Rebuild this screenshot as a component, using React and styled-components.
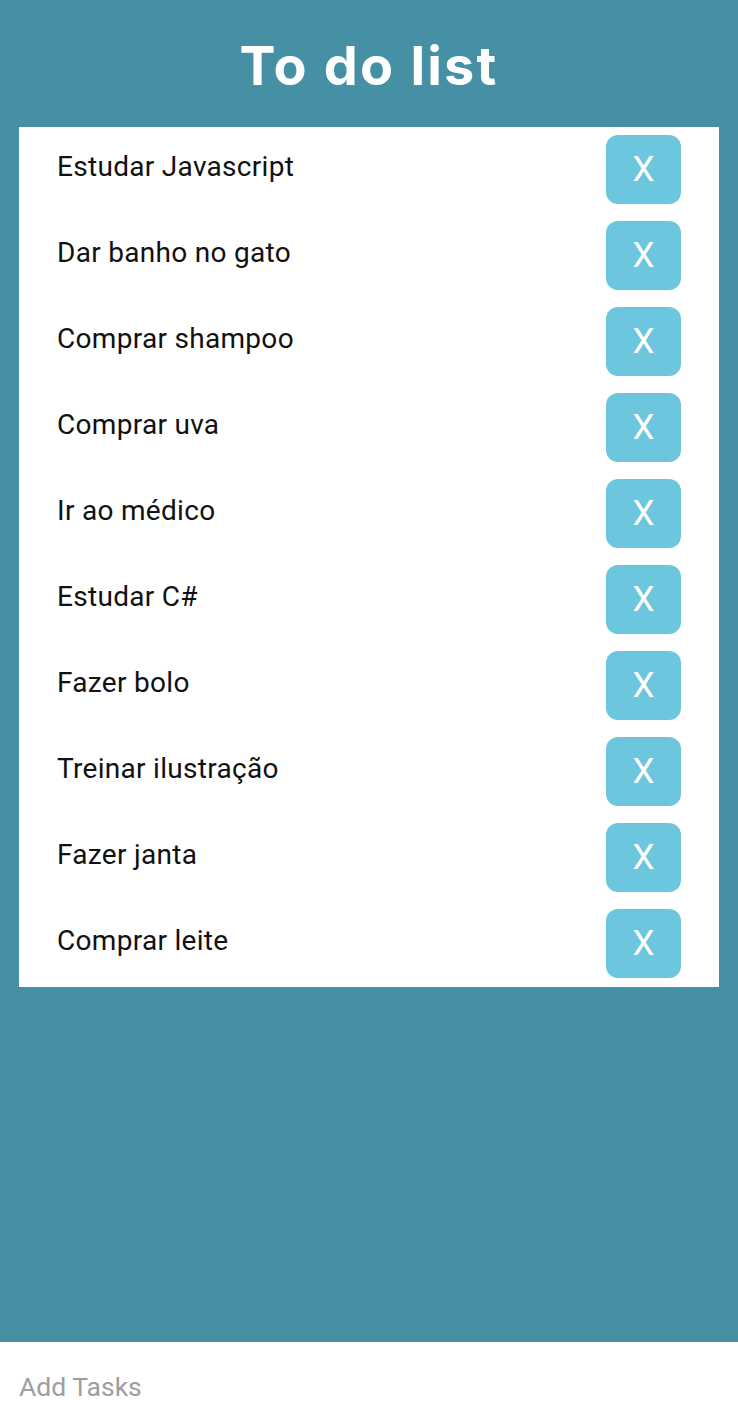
import styled, { createGlobalStyle } from "styled-components";

const GlobalStyle = createGlobalStyle`
  body {
    margin: 0;
    background: #4690a6;
    font-family: Roboto, "Liberation Sans", sans-serif;
  }
`;

const tasks = [
  "Estudar Javascript",
  "Dar banho no gato",
  "Comprar shampoo",
  "Comprar uva",
  "Ir ao médico",
  "Estudar C#",
  "Fazer bolo",
  "Treinar ilustração",
  "Fazer janta",
  "Comprar leite",
];

const Page = styled.div`
  min-height: 1420px;
  display: flex;
  flex-direction: column;
  background: #4690a6;
`;

const Header = styled.header`
  height: 127px;
  display: flex;
  align-items: center;
  justify-content: center;
`;

const Title = styled.h1`
  margin: 4px 0 0;
  color: #ffffff;
  font-family: Inter, "Open Sans", sans-serif;
  font-weight: 700;
  font-size: 54px;
  letter-spacing: 2.2px;
  line-height: 1;
`;

const List = styled.ul`
  list-style: none;
  margin: 0 19px;
  padding: 8px 38px 9px 38px;
  background: #ffffff;
  display: flex;
  flex-direction: column;
  gap: 17px;
`;

const Row = styled.li`
  display: flex;
  align-items: center;
  justify-content: space-between;
  height: 69px;
`;

const TaskText = styled.span`
  color: #111111;
  font-size: 28px;
  letter-spacing: 0.3px;
  padding-bottom: 6px;
`;

const DeleteButton = styled.button`
  width: 75px;
  height: 69px;
  border: none;
  border-radius: 12px;
  background: #6bc6de;
  color: #ffffff;
  font-family: Roboto, "Liberation Sans", sans-serif;
  font-weight: 400;
  font-size: 35px;
  padding: 0;
  display: flex;
  align-items: center;
  justify-content: center;
`;

const Spacer = styled.div`
  flex: 1;
`;

const InputBar = styled.div`
  height: 78px;
  background: #ffffff;
  display: flex;
  align-items: center;
  padding: 10px 19px 0;
  box-sizing: border-box;
`;

const TaskInput = styled.input`
  border: none;
  outline: none;
  width: 100%;
  font-family: Roboto, "Liberation Sans", sans-serif;
  font-size: 26.5px;
  color: #333;
  padding: 0;
  &::placeholder {
    color: #9e9e9e;
  }
`;

export default function App() {
  return (
    <Page>
      <GlobalStyle />
      <Header>
        <Title>To do list</Title>
      </Header>
      <List>
        {tasks.map((t) => (
          <Row key={t}>
            <TaskText>{t}</TaskText>
            <DeleteButton>X</DeleteButton>
          </Row>
        ))}
      </List>
      <Spacer />
      <InputBar>
        <TaskInput placeholder="Add Tasks" />
      </InputBar>
    </Page>
  );
}
